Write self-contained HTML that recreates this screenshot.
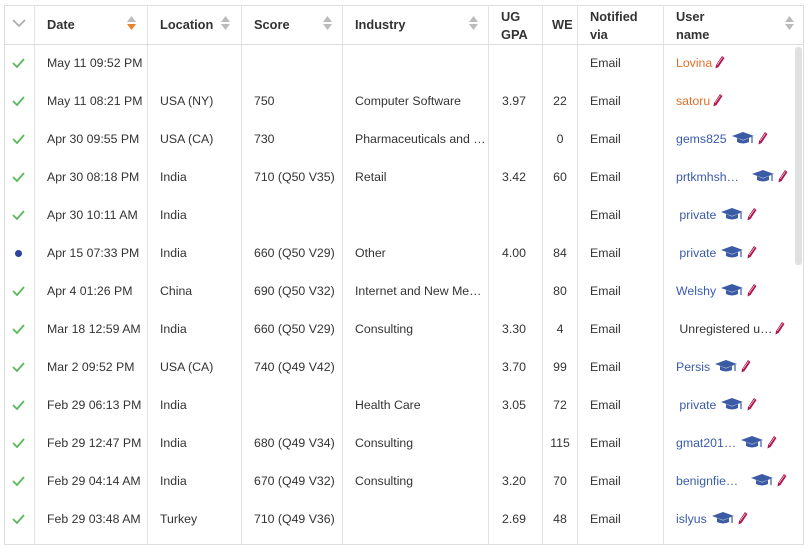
<!DOCTYPE html><html><head><style>
body{margin:0;background:#fff;font-family:"Liberation Sans",sans-serif;font-size:12.3px;color:#333;}
.t{position:absolute;left:4px;top:5px;width:800px;height:540px;border:1px solid #ddd;box-sizing:border-box;}
.v{position:absolute;top:5px;height:540px;width:1px;background:#e2e2e2}
.h{position:absolute;left:4px;width:800px;height:1px;background:#ddd}
.c{position:absolute;white-space:nowrap;line-height:15px}
.b{font-weight:bold;color:#333;font-size:12.8px}
.u{color:#3a5bab}.o{color:#e0702a}
.s{position:absolute;width:9px;height:14px}
</style></head><body>
<div class="t"></div>
<div class="v" style="left:34px"></div><div class="v" style="left:147px"></div><div class="v" style="left:241px"></div><div class="v" style="left:342px"></div><div class="v" style="left:488px"></div><div class="v" style="left:542px"></div><div class="v" style="left:577px"></div><div class="v" style="left:663px"></div>
<div class="h" style="top:44px"></div>
<div style="position:absolute;left:795px;top:47px;width:7px;height:218px;background:#e0e0e0;border-radius:3px"></div>
<svg style="position:absolute;left:12px;top:19px" width="14" height="9"><path d="M1 1L7 7L13 1" stroke="#aaa" stroke-width="1.6" fill="none"/></svg>
<div class="c b" style="left:47px;top:17px">Date</div>
<svg class="s" style="left:127px;top:16px" viewBox="0 0 9 14"><path d="M0 6L4.5 0L9 6Z" fill="#bbb"/><path d="M0 8L4.5 14L9 8Z" fill="#e8832a"/></svg>
<div class="c b" style="left:160px;top:17px">Location</div>
<svg class="s" style="left:221px;top:16px" viewBox="0 0 9 14"><path d="M0 6L4.5 0L9 6Z" fill="#bbb"/><path d="M0 8L4.5 14L9 8Z" fill="#bbb"/></svg>
<div class="c b" style="left:254px;top:17px">Score</div>
<svg class="s" style="left:323px;top:16px" viewBox="0 0 9 14"><path d="M0 6L4.5 0L9 6Z" fill="#bbb"/><path d="M0 8L4.5 14L9 8Z" fill="#bbb"/></svg>
<div class="c b" style="left:355px;top:17px">Industry</div>
<svg class="s" style="left:469px;top:16px" viewBox="0 0 9 14"><path d="M0 6L4.5 0L9 6Z" fill="#bbb"/><path d="M0 8L4.5 14L9 8Z" fill="#bbb"/></svg>
<div class="c b" style="left:501px;top:8px;line-height:18px">UG<br>GPA</div>
<div class="c b" style="left:552px;top:17px">WE</div>
<div class="c b" style="left:590px;top:8px;line-height:18px">Notified<br>via</div>
<div class="c b" style="left:676px;top:8px;line-height:18px">User<br>name</div>
<svg class="s" style="left:785px;top:16px" viewBox="0 0 9 14"><path d="M0 6L4.5 0L9 6Z" fill="#bbb"/><path d="M0 8L4.5 14L9 8Z" fill="#bbb"/></svg>
<div id="rows"></div>
<script>
var cap='<svg width="24" height="14" viewBox="0 0 24 14" style="vertical-align:-2px;margin-left:4px"><path d="M12 1L23 5L12 9L1 5Z" fill="#3b5ba5"/><path d="M6 7V11Q12 14 18 11V7L12 9.5Z" fill="#3b5ba5"/><path d="M21 6V12" stroke="#3b5ba5" stroke-width="1.2"/></svg>';
var pen='<svg width="10" height="14" viewBox="0 0 10 14" style="vertical-align:-2px;margin-left:3px"><path d="M7 1L9.5 3L3.5 12L0.5 13.5L1 10Z" fill="#b0164f"/><path d="M2 10L7.5 2.5" stroke="#fff" stroke-width="0.6"/></svg>';
var R=[["c","May 11 09:52 PM","","","","","","o","Lovina",0],
["c","May 11 08:21 PM","USA (NY)","750","Computer Software","3.97","22","o","satoru",0],
["c","Apr 30 09:55 PM","USA (CA)","730","Pharmaceuticals and …","","0","u","gems825",1],
["c","Apr 30 08:18 PM","India","710 (Q50 V35)","Retail","3.42","60","u","prtkmhsh…",1],
["c","Apr 30 10:11 AM","India","","","","","u"," private",1],
["d","Apr 15 07:33 PM","India","660 (Q50 V29)","Other","4.00","84","u"," private",1],
["c","Apr 4 01:26 PM","China","690 (Q50 V32)","Internet and New Me…","","80","u","Welshy",1],
["c","Mar 18 12:59 AM","India","660 (Q50 V29)","Consulting","3.30","4","x"," Unregistered u…",0],
["c","Mar 2 09:52 PM","USA (CA)","740 (Q49 V42)","","3.70","99","u","Persis",1],
["c","Feb 29 06:13 PM","India","","Health Care","3.05","72","u"," private",1],
["c","Feb 29 12:47 PM","India","680 (Q49 V34)","Consulting","","115","u","gmat201…",1],
["c","Feb 29 04:14 AM","India","670 (Q49 V32)","Consulting","3.20","70","u","benignfie…",1],
["c","Feb 29 03:48 AM","Turkey","710 (Q49 V36)","","2.69","48","u","islyus",1]];
var h='';
R.forEach(function(r,i){var y=56+i*38;
h+=r[0]=="c"?'<svg style="position:absolute;left:12px;top:'+(y+2)+'px" width="13" height="10"><path d="M1 5L5 9L12 1" stroke="#5cb85c" stroke-width="1.8" fill="none"/></svg>':'<div style="position:absolute;left:15px;top:'+(y+4)+'px;width:7px;height:7px;border-radius:50%;background:#2a44a0"></div>';
h+='<div class="c" style="left:47px;top:'+y+'px">'+r[1]+'</div><div class="c" style="left:160px;top:'+y+'px">'+r[2]+'</div><div class="c" style="left:254px;top:'+y+'px">'+r[3]+'</div><div class="c" style="left:355px;top:'+y+'px">'+r[4]+'</div><div class="c" style="left:502px;top:'+y+'px">'+r[5]+'</div><div class="c" style="left:543px;width:34px;text-align:center;top:'+y+'px">'+r[6]+'</div><div class="c" style="left:590px;top:'+y+'px">Email</div>';
var sp=r[9]?'<span style="margin-left:'+(r[8].length>8?8:0)+'px"></span>'+cap:'';
h+='<div class="c" style="left:676px;top:'+(y-1)+'px"><span class="'+r[7]+'">'+r[8].replace(/^ /,'&nbsp;')+'</span>'+sp+pen+'</div>';});
document.getElementById('rows').innerHTML=h;
</script>
</body></html>
